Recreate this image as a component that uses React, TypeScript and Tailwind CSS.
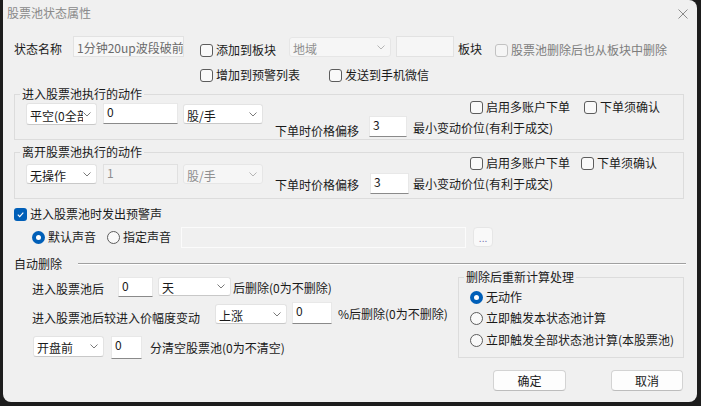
import React from 'react';

const Chevron = ({ light = false }: { light?: boolean }) => (
  <svg width="8" height="5" viewBox="0 0 8 5" className="shrink-0">
    <path d="M0.5 0.5 L4 4 L7.5 0.5" stroke={light ? '#b5b5b5' : '#7a7a7a'} strokeWidth="1" fill="none" />
  </svg>
);

const Check = ({ checked = false, disabled = false }: { checked?: boolean; disabled?: boolean }) => {
  if (checked) {
    return (
      <span className="w-[13px] h-[13px] rounded-[3px] bg-[#005fb8] flex items-center justify-center shrink-0">
        <svg width="9" height="9" viewBox="0 0 9 9">
          <path d="M1.8 4.7 L3.7 6.6 L7.3 2.6" stroke="white" strokeWidth="1.1" fill="none" />
        </svg>
      </span>
    );
  }
  return (
    <span
      className={`w-[13px] h-[13px] rounded-[3px] border shrink-0 ${
        disabled ? 'bg-[#f5f5f5] border-[#c2c2c2]' : 'bg-[#f9f9f9] border-[#5c5c5c]'
      }`}
    />
  );
};

const CheckLabel = ({
  label,
  checked = false,
  disabled = false,
  className = '',
}: {
  label: string;
  checked?: boolean;
  disabled?: boolean;
  className?: string;
}) => (
  <div className={`flex items-center gap-[3px] h-[14px] whitespace-nowrap ${disabled ? 'text-[#7d7d7d]' : ''} ${className}`}>
    <Check checked={checked} disabled={disabled} />
    <span>{label}</span>
  </div>
);

const Radio = ({ label, on = false, className = '' }: { label: string; on?: boolean; className?: string }) => (
  <div className={`flex items-center gap-[3px] h-[14px] whitespace-nowrap ${className}`}>
    {on ? (
      <span className="w-[13px] h-[13px] rounded-full bg-[#005fb8] flex items-center justify-center shrink-0">
        <span className="w-[5px] h-[5px] rounded-full bg-white" />
      </span>
    ) : (
      <span className="w-[13px] h-[13px] rounded-full border border-[#5c5c5c] bg-[#f9f9f9] shrink-0" />
    )}
    <span>{label}</span>
  </div>
);

const Select = ({ value, className = '', disabled = false }: { value: string; className?: string; disabled?: boolean }) => (
  <div
    className={`flex items-center border rounded-[3px] pl-[3px] pr-[5px] shrink-0 ${
      disabled ? 'bg-[#f6f6f6] border-[#e6e6e6] text-[#8f8f8f]' : 'bg-white border-[#e3e3e3] border-b-[#c8c8c8]'
    } ${className}`}
  >
    <span className="flex-1 overflow-hidden whitespace-nowrap pt-[3px]">{value}</span>
    <Chevron light={disabled} />
  </div>
);

const Edit = ({ value = '', className = '', disabled = false }: { value?: string; className?: string; disabled?: boolean }) => (
  <div
    className={`border pl-[3px] pt-[1px] overflow-hidden whitespace-nowrap shrink-0 ${
      disabled ? 'bg-[#f3f3f3] border-[#e0e0e0] text-[#8f8f8f]' : 'bg-white border-[#e8e8e8] border-b-[#8a8a8a]'
    } ${className}`}
  >
    {value}
  </div>
);

const Button = ({ label, className = '' }: { label: string; className?: string }) => (
  <div
    className={`h-[21px] flex items-center justify-center bg-[#fdfdfd] border border-[#d3d3d3] border-b-[#bdbdbd] rounded-[4px] ${className}`}
  >
    {label}
  </div>
);

export default function App() {
  return (
    <div className="w-[701px] h-[406px] bg-[#1d1d1d] overflow-hidden font-['Noto_Sans_CJK_SC','Noto_Sans',sans-serif] text-[12px] leading-[14px] text-[#1a1a1a]">
      <div className="ml-[3px] w-[694px] h-[402px] bg-[#f0f0f0] rounded-tr-[8px] rounded-b-[8px] overflow-hidden">
        {/* title bar */}
        <div className="h-[27px] flex items-center justify-between pl-[4px] pr-[9px]">
          <span className="text-[#8a8a8a] mt-[-1px]">股票池状态属性</span>
          <svg width="10" height="10" viewBox="0 0 10 10">
            <path d="M0.5 0.5 L9.5 9.5 M9.5 0.5 L0.5 9.5" stroke="#8a8a8a" strokeWidth="1" />
          </svg>
        </div>

        <div className="px-[11px]">
          {/* row 1 */}
          <div className="mt-[9px] h-[21px] flex items-start">
            <span className="mt-[6px] w-[48px] whitespace-nowrap">状态名称</span>
            <div className="ml-[11px] w-[111px] h-[21px] bg-[#f7f7f7] border border-[#e2e2e2] text-[#6b6b6b] pl-[3px] pt-[4px] overflow-hidden whitespace-nowrap">
              1分钟20up波段破前高
            </div>
            <CheckLabel label="添加到板块" className="ml-[16px] mt-[7px]" />
            <Select value="地域" disabled className="ml-[13px] mt-[1px] w-[102px] h-[20px]" />
            <div className="ml-[5px] w-[58px] h-[21px] bg-[#f6f6f6] border border-[#e2e2e2] shrink-0" />
            <span className="ml-[4px] mt-[6px] whitespace-nowrap">板块</span>
            <CheckLabel label="股票池删除后也从板块中删除" disabled className="ml-[13px] mt-[7px]" />
          </div>

          {/* row 2 */}
          <div className="mt-[11px] h-[14px] flex items-center">
            <CheckLabel label="增加到预警列表" className="ml-[186px]" />
            <CheckLabel label="发送到手机微信" className="ml-[29px]" />
          </div>

          {/* enter pool action */}
          <fieldset className="mt-[5px] w-[670px] h-[53px] border border-[#dcdcdc]">
            <legend className="ml-[5px] px-[2px] leading-[14px]">进入股票池执行的动作</legend>
            <div className="flex pl-[11px]">
              <div className="flex items-start mt-[2px]">
                <Select value="平空(0全部" className="w-[71px] h-[22px]" />
                <Edit value="0" className="ml-[6px] w-[75px] h-[21px]" />
                <Select value="股/手" className="ml-[5px] mt-[1px] w-[80px] h-[20px]" />
              </div>
              <div className="ml-[12px] flex flex-col">
                <div className="flex mt-[-1px] ml-[195px]">
                  <CheckLabel label="启用多账户下单" />
                  <CheckLabel label="下单须确认" className="ml-[14px]" />
                </div>
                <div className="flex items-start mt-[2px] h-[21px]">
                  <span className="mt-[8px] w-[84px] whitespace-nowrap">下单时价格偏移</span>
                  <Edit value="3" className="ml-[10px] w-[38px] h-[21px]" />
                  <span className="ml-[6px] mt-[5px] whitespace-nowrap">最小变动价位(有利于成交)</span>
                </div>
              </div>
            </div>
          </fieldset>

          {/* leave pool action */}
          <fieldset className="mt-[5px] w-[670px] h-[54px] border border-[#dcdcdc]">
            <legend className="ml-[5px] px-[2px] leading-[14px]">离开股票池执行的动作</legend>
            <div className="flex pl-[11px]">
              <div className="flex items-start mt-[5px]">
                <Select value="无操作" className="w-[71px] h-[20px]" />
                <Edit value="1" disabled className="ml-[6px] w-[75px] h-[20px]" />
                <Select value="股/手" disabled className="ml-[5px] w-[80px] h-[20px]" />
              </div>
              <div className="ml-[12px] flex flex-col">
                <div className="flex mt-[-3px] ml-[195px]">
                  <CheckLabel label="启用多账户下单" />
                  <CheckLabel label="下单须确认" className="ml-[11px]" />
                </div>
                <div className="flex items-start mt-[3px] h-[21px]">
                  <span className="mt-[5px] w-[84px] whitespace-nowrap">下单时价格偏移</span>
                  <Edit value="3" className="ml-[11px] w-[39px] h-[21px]" />
                  <span className="ml-[4px] mt-[4px] whitespace-nowrap">最小变动价位(有利于成交)</span>
                </div>
              </div>
            </div>
          </fieldset>

          {/* alert sound */}
          <div className="mt-[8px] h-[14px] flex items-center">
            <CheckLabel label="进入股票池时发出预警声" checked />
          </div>
          <div className="mt-[5px] h-[22px] flex items-center">
            <Radio label="默认声音" on className="ml-[18px]" />
            <Radio label="指定声音" className="ml-[11px]" />
            <div className="ml-[10px] w-[285px] h-[21px] border border-[#fbfbfb] bg-[#f0f0f0]" />
            <div className="ml-[7px] w-[20px] h-[20px] bg-[#f9f9f9] border border-[#e6e6e6] rounded-[4px] flex items-end justify-center pb-[3px] text-[#7a78b0] text-[10px] leading-[10px]">
              ...
            </div>
          </div>

          {/* auto delete */}
          <div className="mt-[9px] h-[14px] flex items-center">
            <span className="whitespace-nowrap">自动删除</span>
            <div className="flex-1 ml-[16px] mt-[-1px] border-t border-[#a0a0a0] border-b border-b-white" />
          </div>

          <div className="flex mt-[-1px]">
            <div className="w-[444px] pl-[18px]">
              <div className="mt-[7px] h-[20px] flex items-start">
                <span className="mt-[5px] w-[72px] whitespace-nowrap">进入股票池后</span>
                <Edit value="0" className="ml-[14px] w-[35px] h-[20px]" />
                <Select value="天" className="ml-[5px] w-[73px] h-[19px]" />
                <span className="ml-[2px] mt-[4px] whitespace-nowrap">后删除(0为不删除)</span>
              </div>
              <div className="mt-[5px] h-[22px] flex items-start">
                <span className="mt-[9px] w-[168px] whitespace-nowrap">进入股票池后较进入价幅度变动</span>
                <Select value="上涨" className="ml-[15px] mt-[2px] w-[72px] h-[20px]" />
                <Edit value="0" className="ml-[5px] w-[40px] h-[22px]" />
                <span className="ml-[6px] mt-[5px] whitespace-nowrap">%后删除(0为不删除)</span>
              </div>
              <div className="mt-[12px] h-[23px] flex items-start">
                <Select value="开盘前" className="ml-[1px] w-[71px] h-[21px]" />
                <Edit value="0" className="ml-[7px] w-[31px] h-[23px]" />
                <span className="ml-[8px] mt-[5px] whitespace-nowrap">分清空股票池(0为不清空)</span>
              </div>
            </div>

            <div className="flex flex-col">
              <fieldset className="w-[226px] h-[88px] border border-[#dcdcdc]">
                <legend className="ml-[5px] px-[2px] leading-[14px]">删除后重新计算处理</legend>
                <div className="pl-[11px]">
                  <Radio label="无动作" on className="mt-[6px]" />
                  <Radio label="立即触发本状态池计算" className="mt-[7px]" />
                  <Radio label="立即触发全部状态池计算(本股票池)" className="mt-[8px]" />
                </div>
              </fieldset>
              <div className="flex mt-[12px] pl-[35px]">
                <Button label="确定" className="w-[73px]" />
                <Button label="取消" className="ml-[45px] w-[72px]" />
              </div>
            </div>
          </div>
        </div>
      </div>
    </div>
  );
}
